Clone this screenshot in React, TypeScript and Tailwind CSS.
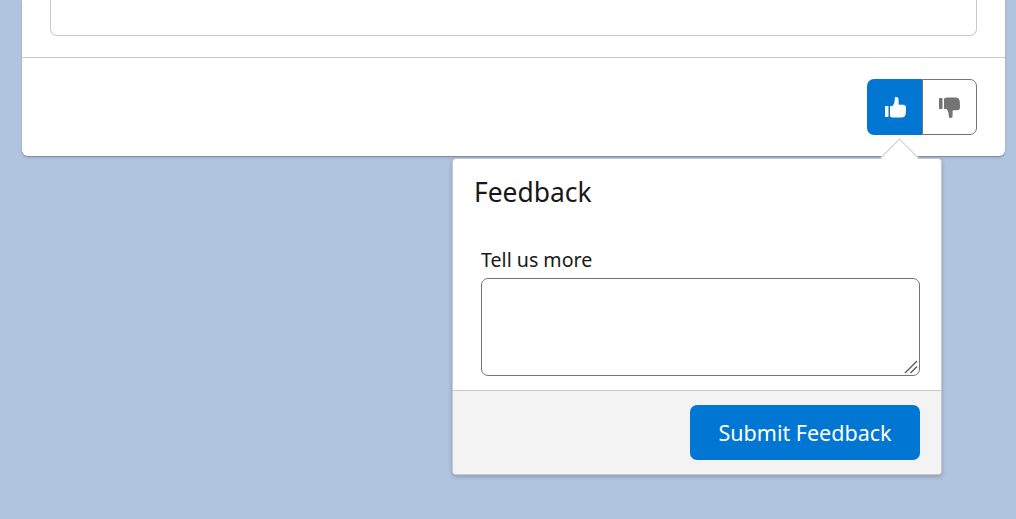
const Thumb = ({ className }: { className: string }) => (
  <svg viewBox="0 0 21 21" className={className} fill="currentColor" aria-hidden="true">
    <path d="M0.7 9h2.300c.3 0 .5.2.5.5V19c0 .6-.5 1-1 1H.7c-.4 0-.7-.3-.7-.7V9.700C0 9.300.3 9 .7 9z" />
    <path d="M5 10c0-.6.4-1 1-1h1.500C9 7.500 9.800 5 9.800 1.200 9.800.5 10.300 0 11 0h.5C12.800 0 13.600 1 13.600 2.300V7c0 .5.300.8.800.8h3.800C20 7.800 21 9 21 10.800l-.2 5.400c-.1 2.800-1.800 4.300-4.300 4.300H9.500C7 20.500 5 20 5 19z" />
  </svg>
);

export default function App() {
  return (
    <div className="h-[519px] overflow-hidden bg-[#b0c4df] font-['Noto_Sans','Open_Sans',sans-serif] text-[#181818]">
      <div className="ml-[22px] w-[983px] h-[156px] bg-white rounded-b-[6px] shadow-[0_1px_1px_rgba(0,0,0,0.2),0_2px_3px_rgba(0,0,0,0.1)] flex flex-col">
        <div className="mx-[28px] h-[36px] shrink-0 border border-t-0 border-[#c9c9c9] rounded-b-[7px]" />
        <div className="mt-[21px] border-t border-[#c9c9c9] flex-1 flex justify-end items-start pt-[21px] pr-[28px]">
          <div className="flex h-[56px]">
            <button className="w-[55px] h-full bg-[#0176d3] rounded-l-[7px] flex items-center justify-center text-white">
              <Thumb className="w-[21px] h-[21px] ml-[2px]" />
            </button>
            <button className="w-[55px] h-full border border-[#747474] rounded-r-[7px] flex items-center justify-center text-[#747474]">
              <Thumb className="w-[21px] h-[21px] -scale-y-100" />
            </button>
          </div>
        </div>
      </div>

      <div className="relative ml-[452px] mt-[2px] w-[490px] h-[317px] bg-white rounded-[4px] border border-[#c9c9c9] shadow-[0_2px_4px_rgba(0,0,0,0.2)] flex flex-col">
        <div className="absolute left-[433px] -top-[15px] w-[27px] h-[27px] rotate-45 bg-white border-l border-t border-[#c9c9c9]" />
        <div className="relative pl-[21px] pt-[14px] h-[70px] text-[26.400px] leading-[38px]">Feedback</div>
        <div className="relative flex-1 flex flex-col px-[28px]">
          <label className="text-[19.600px] leading-[28px] mt-[17px]">Tell us more</label>
          <div className="relative mt-[4px] w-[439px] h-[98px]">
            <textarea className="w-full h-full block bg-white border border-[#747474] rounded-[7px] outline-none resize-none" />
            <svg viewBox="0 0 14 14" className="absolute right-[2px] bottom-[2px] w-[14px] h-[14px] text-[#555]" stroke="currentColor" strokeWidth="1.300" fill="none" aria-hidden="true">
              <path d="M1 13 13 1M6.500 13 13 6.500" />
            </svg>
          </div>
        </div>
        <div className="h-[84px] bg-[#f3f3f3] border-t border-[#c9c9c9] rounded-b-[4px] flex justify-end pt-[14px] pr-[21px]">
          <button className="w-[230px] h-[55px] bg-[#0176d3] rounded-[7px] text-white text-[21.500px] leading-[32px]">Submit Feedback</button>
        </div>
      </div>
    </div>
  );
}
